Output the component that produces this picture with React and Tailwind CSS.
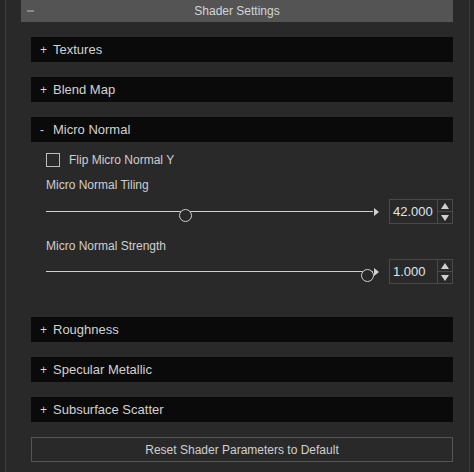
const font = { fontFamily: '"Liberation Sans", Arial, sans-serif' };

function Section({ sign = '+', title, children }) {
  return (
    <div>
      <div className="h-[25px] bg-[#0a0a0a] flex items-center pl-[9px] text-[13px] text-[#d2d2d2]">
        <span className="w-[13px] text-[12px]">{sign}</span>
        <span>{title}</span>
      </div>
      {children}
    </div>
  );
}

function Spin({ value }) {
  return (
    <div className="w-[64px] h-[25px] border border-[#4a4a4a] flex">
      <div className="flex-1 flex items-center pl-[3px] text-[13px] text-[#dfe6ee]">{value}</div>
      <div className="w-[15px] border-l border-[#4a4a4a] flex flex-col">
        <div className="flex-1 flex items-center justify-center border-b border-[#4a4a4a]">
          <svg width="8" height="6" viewBox="0 0 8 6"><path d="M4 0 L8 6 L0 6 Z" fill="#d0d0d0" /></svg>
        </div>
        <div className="flex-1 flex items-center justify-center">
          <svg width="8" height="6" viewBox="0 0 8 6"><path d="M0 0 L8 0 L4 6 Z" fill="#d0d0d0" /></svg>
        </div>
      </div>
    </div>
  );
}

function Slider({ pos, value }) {
  return (
    <div className="flex items-center h-[25px]">
      <div className="relative w-[328px] h-[25px] flex items-center">
        <div className="w-full h-px bg-[#cfcfcf]" />
        <div
          className="absolute top-[10px] w-[13px] h-[13px] rounded-full border border-[#cfcfcf] bg-[#282828]"
          style={{ left: pos - 6 }}
        />
      </div>
      <svg width="5" height="8" viewBox="0 0 5 8" className="ml-px mt-px"><path d="M0 0 L5 4 L0 8 Z" fill="#cfcfcf" /></svg>
      <div className="ml-[10px]">
        <Spin value={value} />
      </div>
    </div>
  );
}

export default function App() {
  return (
    <div className="w-[474px] h-[472px] bg-[#262626] pl-[5px] pr-[4px] overflow-hidden" style={font}>
      <div className="h-full border-x border-[#3a3a3a] bg-[#292929] pl-[15px] pr-[16px]">
        <div className="h-[22px] bg-[#545454] relative flex items-center justify-center text-[12px] text-[#d4d4d4]">
          <div className="absolute left-[6px] top-[10px] w-[7px] h-[2px] bg-[#8a8a8a]" />
          Shader Settings
        </div>
        <div className="ml-[10px] mt-[15px] flex flex-col gap-[15px]">
          <Section title="Textures" />
          <Section title="Blend Map" />
          <Section sign="-" title="Micro Normal">
            <div className="pl-[15px] text-[12px] text-[#cfcfcf]">
              <div className="flex items-center mt-[11px] h-[14px]">
                <div className="w-[14px] h-[14px] border border-[#bdbdbd]" />
                <span className="ml-[9px]">Flip Micro Normal Y</span>
              </div>
              <div className="mt-[11px] h-[14px] leading-[14px]">Micro Normal Tiling</div>
              <div className="mt-[7px]">
                <Slider pos={139} value="42.000" />
              </div>
              <div className="mt-[15px] h-[14px] leading-[14px]">Micro Normal Strength</div>
              <div className="mt-[6px]">
                <Slider pos={321} value="1.000" />
              </div>
              <div className="h-[18px]" />
            </div>
          </Section>
          <Section title="Roughness" />
          <Section title="Specular Metallic" />
          <Section title="Subsurface Scatter" />
          <div className="h-[25px] border border-[#555555] flex items-center justify-center text-[12px] text-[#d0d0d0]">
            Reset Shader Parameters to Default
          </div>
        </div>
      </div>
    </div>
  );
}
